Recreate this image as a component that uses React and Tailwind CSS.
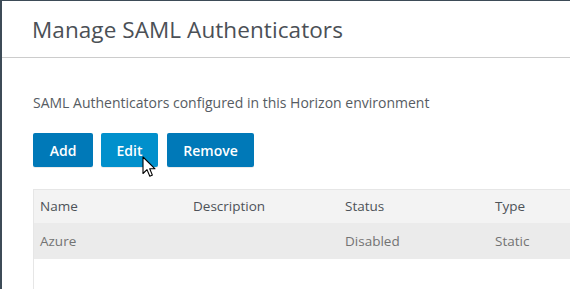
import React from 'react';

const columns = [
  { label: 'Name', key: 'name', w: 'w-[153px]' },
  { label: 'Description', key: 'description', w: 'w-[152px]' },
  { label: 'Status', key: 'status', w: 'w-[150px]' },
  { label: 'Type', key: 'type', w: 'w-[150px]' },
];
const rows = [{ name: 'Azure', description: '', status: 'Disabled', type: 'Static' }];

function Cursor() {
  return (
    <svg width="15" height="23" viewBox="0 0 15 23" className="absolute left-[41px] top-[23px]">
      <path d="M1 1 L1 17.5 L5 13.6 L7.8 20.2 L10.4 19.1 L7.7 12.8 L13 12.8 Z"
            fill="#fff" stroke="#000" strokeWidth="1.1" strokeLinejoin="round" />
    </svg>
  );
}

export default function App() {
  const btn = 'h-[34px] rounded-[2px] text-white text-[14px] font-semibold shadow-[0_1px_0_rgba(0,0,0,0.08)]';

  return (
    <div className="w-[570px] h-[289px] overflow-hidden bg-[#3d4b57] pl-[2px] pt-[1px]">
      <div className="h-full bg-white font-['Open_Sans',sans-serif]">

        {/* header */}
        <div className="h-[57px] border-b border-[#cccccc] pl-[30px] flex items-center">
          <h1 className="text-[22.5px] tracking-[0.08px] text-[#4b5056] font-normal pt-[1px]">
            Manage SAML Authenticators
          </h1>
        </div>

        <div className="pl-[31px]">
          <p className="mt-[35px] text-[14px] leading-[20px] text-[#565c63]">
            SAML Authenticators configured in this Horizon environment
          </p>

          <div className="flex gap-2 mt-[20px]">
            <button className={`${btn} w-[60px] bg-[#0079b8]`}>Add</button>
            <button className={`${btn} relative w-[57px] bg-[#0190cc]`}>
              Edit
              <Cursor />
            </button>
            <button className={`${btn} w-[87px] ml-[1px] bg-[#0079b8]`}>Remove</button>
          </div>

          {/* table */}
          <div className="mt-[22px] border-l border-t border-[#e6e6e6] text-[13.5px] h-[120px]">
            <div className="flex h-[33px] items-center bg-[#f3f3f3] text-[#4d5258]">
              {columns.map((c) => (
                <div key={c.key} className={`${c.w} pl-[6px] shrink-0`}>{c.label}</div>
              ))}
            </div>
            {rows.map((r) => (
              <div key={r.name} className="flex h-[36px] items-center bg-[#ebebeb] text-[#737373]">
                {columns.map((c) => (
                  <div key={c.key} className={`${c.w} pl-[6px] shrink-0`}>{r[c.key]}</div>
                ))}
              </div>
            ))}
          </div>
        </div>
      </div>
    </div>
  );
}
